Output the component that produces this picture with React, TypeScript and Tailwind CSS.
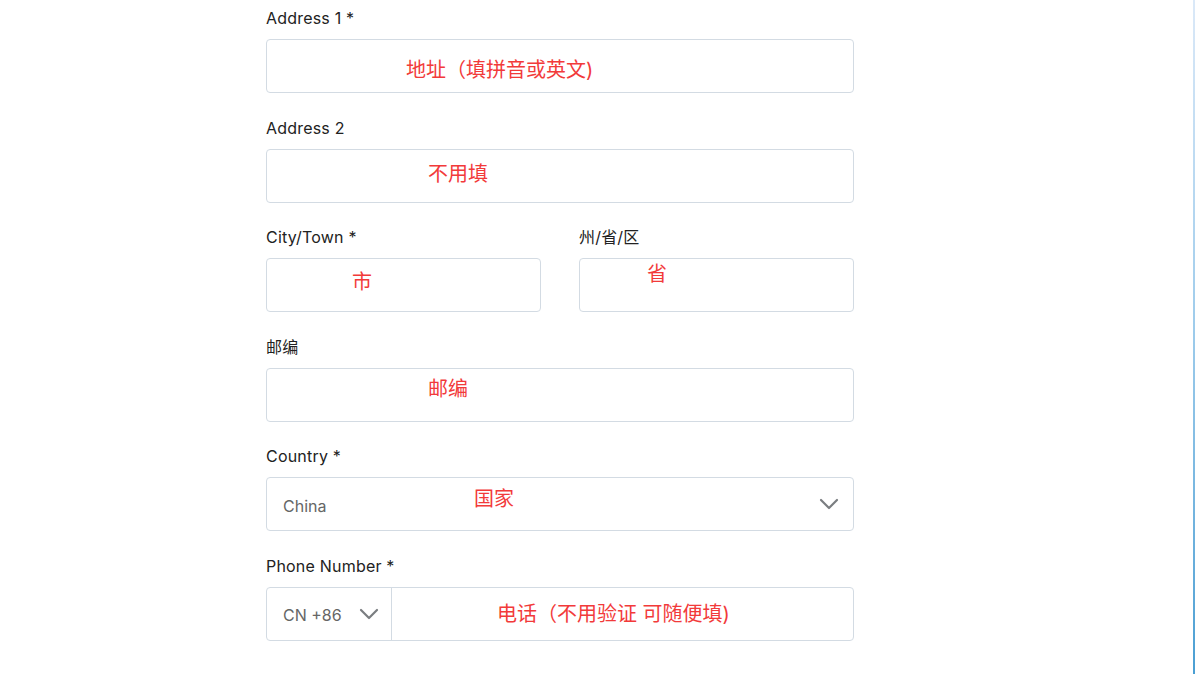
import React from "react";

function Chevron() {
  return (
    <svg width="20" height="12" viewBox="0 0 20 12" fill="none" className="text-[#7a7d80]">
      <path d="M2 2l8 8 8-8" stroke="currentColor" strokeWidth="2.2" strokeLinecap="round" strokeLinejoin="round" />
    </svg>
  );
}

function Note({ children, className }: { children: React.ReactNode; className: string }) {
  return (
    <span className={"absolute whitespace-nowrap text-[20px] leading-none text-[#f23a3a] " + className}>
      {children}
    </span>
  );
}

function Label({ children }: { children: React.ReactNode }) {
  return (
    <div className="mb-[11px] h-[20px] text-[16px] leading-[20px] tracking-[0.2px] text-[#222]">{children}</div>
  );
}

const box = "relative h-[54px] rounded-[4px] border border-[#d3dbe3] bg-white";

export default function App() {
  return (
    <div
      className="relative h-[674px] w-[1195px] overflow-hidden bg-white"
      style={{ fontFamily: 'Inter, "Noto Sans CJK SC", sans-serif' }}
    >
      <div className="absolute right-0 top-0 h-full w-[2px] bg-gradient-to-b from-[#dbe9f8] via-[#9ccbeb] to-[#4a9fd3]" />

      <div className="ml-[266px] flex w-[588px] flex-col gap-[24.5px] pt-[8px]">
        <div>
          <Label>Address 1 *</Label>
          <div className={box}>
            <Note className="left-[139px] top-[20px]">地址（填拼音或英文)</Note>
          </div>
        </div>

        <div>
          <Label>Address 2</Label>
          <div className={box}>
            <Note className="left-[161px] top-[14px]">不用填</Note>
          </div>
        </div>

        <div className="grid grid-cols-2 gap-[38px]">
          <div>
            <Label>City/Town *</Label>
            <div className={box}>
              <Note className="left-[85px] top-[13px]">市</Note>
            </div>
          </div>
          <div>
            <Label>州/省/区</Label>
            <div className={box}>
              <Note className="left-[67px] top-[5px]">省</Note>
            </div>
          </div>
        </div>

        <div>
          <Label>邮编</Label>
          <div className={box}>
            <Note className="left-[161px] top-[10px]">邮编</Note>
          </div>
        </div>

        <div>
          <Label>Country *</Label>
          <div className={box + " flex items-center justify-between pl-[16px] pr-[14px]"}>
            <span className="pt-[4px] text-[16px] text-[#666]">China</span>
            <Chevron />
            <Note className="left-[207px] top-[11px]">国家</Note>
          </div>
        </div>

        <div>
          <Label>Phone Number *</Label>
          <div className={box + " flex"}>
            <div className="flex w-[125px] items-center justify-between border-r border-[#d3dbe3] pl-[16px] pr-[12px]">
              <span className="pt-[2px] text-[16px] text-[#666]">CN +86</span>
              <Chevron />
            </div>
            <Note className="left-[230px] top-[16px]">电话（不用验证 可随便填)</Note>
          </div>
        </div>
      </div>
    </div>
  );
}
